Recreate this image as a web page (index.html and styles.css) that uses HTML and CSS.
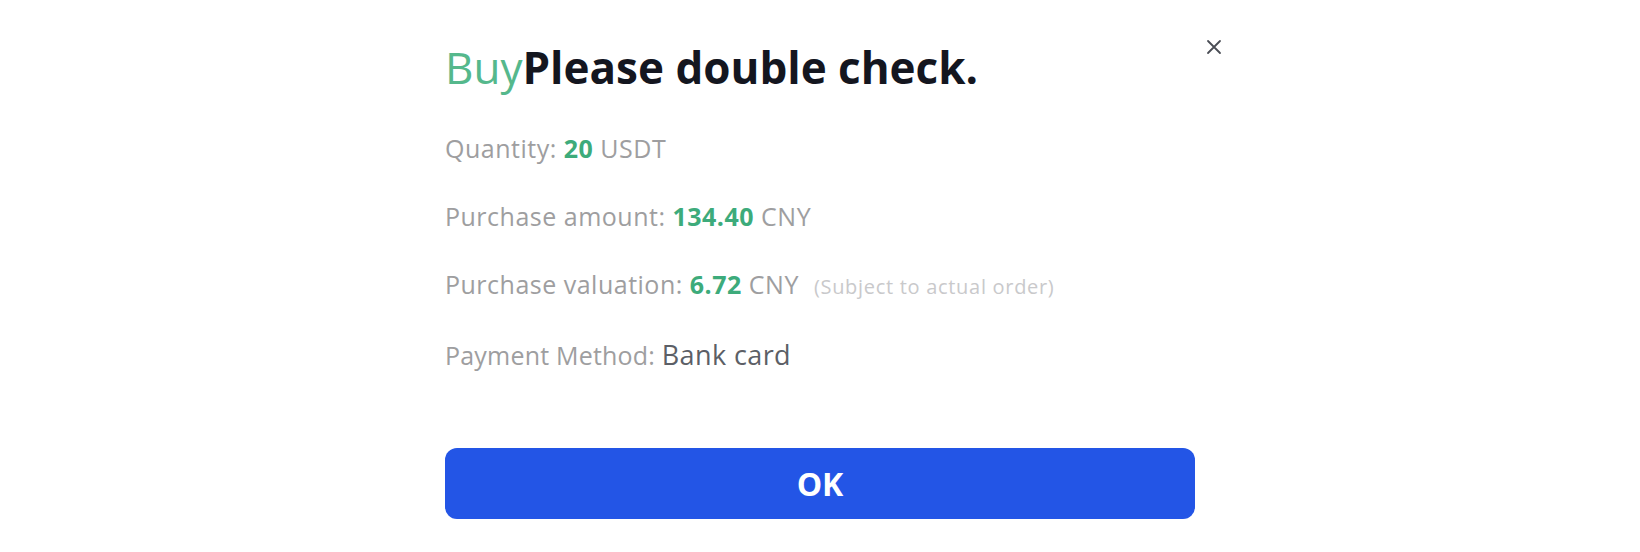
FILE: index.html
```html
<!DOCTYPE html>
<html>
<head>
<meta charset="utf-8">
<link rel="stylesheet" href="styles.css">
</head>
<body>
<div class="dialog">
  <button class="close" aria-label="Close">
    <svg width="16" height="16" viewBox="0 0 16 16"><path d="M2 2L14 14M14 2L2 14" stroke="#4a4d55" stroke-width="1.8" stroke-linecap="round"/></svg>
  </button>
  <h1 class="title"><span class="buy">Buy</span>Please double check.</h1>
  <div class="rows">
    <div class="row"><span class="label">Quantity: </span><span class="val">20</span><span class="unit"> USDT</span></div>
    <div class="row"><span class="label">Purchase amount: </span><span class="val">134.40</span><span class="unit"> CNY</span></div>
    <div class="row"><span class="label">Purchase valuation: </span><span class="val">6.72</span><span class="unit"> CNY</span><span class="note">(Subject to actual order)</span></div>
    <div class="row"><span class="label label-tight">Payment Method: </span><span class="method">Bank card</span></div>
  </div>
  <button class="ok">OK</button>
</div>
</body>
</html>
```
FILE: styles.css
```css
html, body {
  margin: 0;
  padding: 0;
  background: #ffffff;
}
body {
  font-family: "Open Sans", Roboto, sans-serif;
  width: 1640px;
  height: 552px;
  overflow: hidden;
}
.dialog {
  position: relative;
  width: 750px;
  margin: 0 auto;
  padding: 40px 0 0;
  display: flex;
  flex-direction: column;
}
.close {
  position: absolute;
  top: 39px;
  right: -27px;
  width: 16px;
  height: 16px;
  padding: 0;
  border: 0;
  background: none;
  display: flex;
}
.title {
  margin: 0;
  font-size: 44px;
  line-height: 54px;
  font-weight: 700;
  color: #14161f;
  letter-spacing: 0;
}
.buy {
  color: #55b88c;
  font-weight: 400;
}
.rows {
  margin-top: 40px;
  display: flex;
  flex-direction: column;
  gap: 39px;
}
.row {
  font-size: 25px;
  line-height: 29px;
  letter-spacing: 0.5px;
  color: #9e9ea0;
  white-space: nowrap;
}
.label-tight {
  letter-spacing: 0.2px;
}
.val {
  color: #3dab7b;
  font-weight: 700;
}
.unit {
  color: #9e9ea0;
}
.note {
  margin-left: 15px;
  font-size: 20px;
  letter-spacing: 0.7px;
  color: #c9c9cb;
}
.method {
  color: #5c5f66;
  font-size: 27px;
  letter-spacing: 0.4px;
}
.ok {
  margin-top: 78px;
  height: 71px;
  border: 0;
  border-radius: 12px;
  background: #2355e6;
  color: #ffffff;
  font-family: "Open Sans", Roboto, sans-serif;
  font-size: 32px;
  font-weight: 700;
}
```
